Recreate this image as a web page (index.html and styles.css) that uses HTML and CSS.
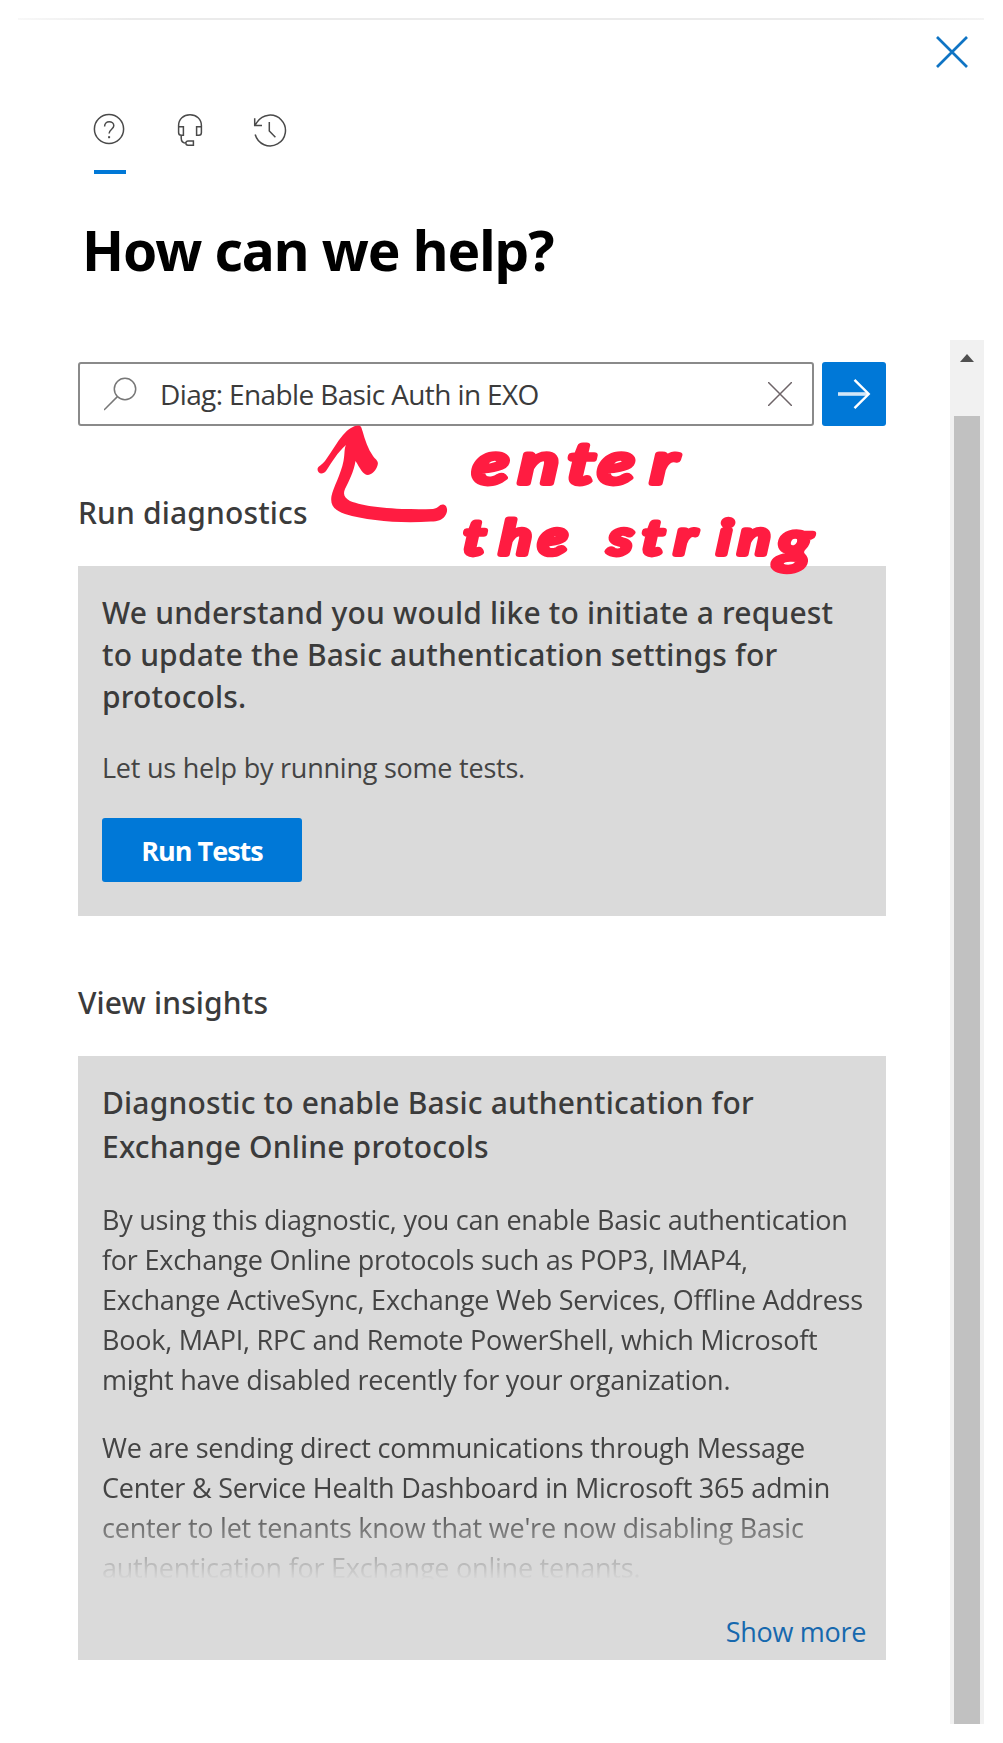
FILE: index.html
```
<!DOCTYPE html>
<html lang="en">
<head>
<meta charset="utf-8">
<title>How can we help?</title>
<link rel="stylesheet" href="styles.css">
</head>
<body>
<div class="panel">
  <header class="panel-header">
    <button class="icon-button close" aria-label="Close">
      <svg width="32" height="32" viewBox="0 0 32 32"><path d="M1 1L31 31M31 1L1 31"/></svg>
    </button>
    <nav class="tabs">
      <a class="tab tab-active" aria-label="Help">
        <svg width="32" height="32" viewBox="0 0 32 32"><circle cx="15" cy="15" r="14.6"/><path d="M10.6 12.4C10.6 9.4 12.6 7.8 15.2 7.8S19.8 9.5 19.8 11.8C19.8 15.2 15.1 15.5 15.1 19.6"/><path class="dot" d="M14.1 22.2h2v2h-2z"/></svg>
      </a>
      <a class="tab" aria-label="Support">
        <svg width="32" height="32" viewBox="0 0 32 32"><path d="M4.6 12.5V11.5C4.6 5 9.5.8 16 .8S27.4 5 27.4 11.5V18.5C27.4 20.5 26.4 21.3 25 21.3H22.6V12.7H27.4M4.6 12.5V18.5C4.6 20.5 5.6 21.3 7.2 21.3H9.4V12.7H4.6M7.2 21.3V24C7.2 27.8 9 29.2 12.4 29.2M14 26.9H19.4V31.2H14A2.15 2.15 0 0 1 14 26.9Z"/></svg>
      </a>
      <a class="tab" aria-label="History">
        <svg width="34" height="33" viewBox="0 0 34 33"><path d="M1.2 20.5A15.4 15.4 0 1 0 3.1 8.2L.8 11.5M.7 4.2V11.500H8M15.3 8V17L21.4 23.2"/></svg>
      </a>
    </nav>
    <h1 class="title">How can we help?</h1>
  </header>

  <div class="scroll-area">
    <main class="content">
      <div class="search">
        <div class="search-box">
          <svg class="search-icon" width="34" height="34" viewBox="0 0 34 34"><circle cx="21" cy="12" r="10.7"/><path d="M13.4 19.6L0 33"/></svg>
          <span class="query">Diag: Enable Basic Auth in EXO</span>
          <svg class="clear-icon" width="24" height="24" viewBox="0 0 24 24"><path d="M0 0L24 24M24 0L0 24"/></svg>
        </div>
        <button class="go" aria-label="Search">
          <svg width="34" height="32" viewBox="0 0 34 32"><path class="shaft" d="M1 16H31"/><path d="M17.5 1.8L31.7 16L17.5 30.2"/></svg>
        </button>
      </div>

      <h2 class="section-title">Run diagnostics</h2>
      <section class="card">
        <h3 class="card-title">We understand you would like to initiate a request<br>to update the Basic authentication settings for<br>protocols.</h3>
        <p class="text">Let us help by running some tests.</p>
        <button class="primary">Run Tests</button>
      </section>

      <h2 class="section-title">View insights</h2>
      <section class="card card-insight">
        <h3 class="card-title">Diagnostic to enable Basic authentication for<br>Exchange Online protocols</h3>
        <div class="excerpt">
          <p class="text">By using this diagnostic, you can enable Basic authentication<br>for Exchange Online protocols such as POP3, IMAP4,<br>Exchange ActiveSync, Exchange Web Services, Offline Address<br>Book, MAPI, RPC and Remote PowerShell, which Microsoft<br>might have disabled recently for your organization.</p>
          <p class="text">We are sending direct communications through Message<br>Center &amp; Service Health Dashboard in Microsoft 365 admin<br>center to let tenants know that we're now disabling Basic<br>authentication for Exchange online tenants.</p>
        </div>
        <a class="show-more">Show more</a>
      </section>
    </main>
    <div class="scrollbar">
      <svg class="scroll-up" width="14" height="8" viewBox="0 0 14 8"><path d="M7 0L14 8H0Z"/></svg>
      <div class="thumb"></div>
    </div>
  </div>
</div>

<!-- Ink annotation pointing at the search box -->
<svg class="ink" width="560" height="180" viewBox="300 415 560 180">
  <path class="arrow" d="M317.5 469C318 466 322 465 325 461C332 451 337 442 343 435C348 429 353 426 358 425.5C361.5 425.5 361.5 428 362.5 431C365 440 368 449 373 456C376 460 379 461 377.5 465.5C376 470 373 474 368 475C363 475 360 468 355.5 461C354 471 349 481 345 489C342.5 495 345 498 350 501C365 507 395 510 433 509C439 508 439 504 443.5 504.5C448 506 448 512 445 516C442 520 438 521.5 431 521.5C400 523.5 368 521 345 514C334 510 330 505 331.5 496C333 488 341 474 343.5 461C345 453 344 449 346 445C337 453 332 462 326 471C323.5 474.5 317.5 474.5 317.5 469Z"/>
  <text class="word" transform="translate(472 483) skewX(-4) scale(1.32 1)" font-size="56" x="0 35 72 95 135">enter</text>
  <text class="word" transform="translate(463 554) skewX(-4) scale(1.25 1)" font-size="47" x="0 29 60">the</text>
  <text class="word" transform="translate(608 554) skewX(-4) scale(1.25 1)" font-size="47" x="0 27 53 87 104">strin<tspan x="135" dy="7" font-size="56">g</tspan></text>
</svg>
</body>
</html>
```
FILE: styles.css
```
* { box-sizing: border-box; }

body {
  margin: 0;
  background: #fff;
  color: #3b3b3b;
  font-family: "Open Sans", "Noto Sans", sans-serif;
}

h1, h2, h3, p { margin: 0; }
button { border: 0; padding: 0; font: inherit; }
svg { display: block; fill: none; }

.panel {
  width: 966px;
  margin: 18px 0 0 18px;
}

.panel-header {
  height: 322px;
  display: flex;
  flex-direction: column;
  border-top: 2px solid;
  border-image: linear-gradient(90deg, #f8f8f8, #ebebeb 12%, #ebebeb 88%, #f4f4f4) 1;
}

.close {
  align-self: flex-end;
  margin: 16px 16px 0 0;
  background: none;
}
.close svg { stroke: #0f74c4; stroke-width: 2.7; }

.tabs {
  display: flex;
  gap: 48px;
  margin: 46px 0 0 76px;
}
.tab {
  height: 60px;
  stroke: #4a4a4a;
  stroke-width: 1.5;
}
.tab-active { border-bottom: 4px solid #0078d7; }
.tab svg { overflow: visible; }
.tab .dot { fill: #4a4a4a; stroke: none; }

.title {
  margin: 46px 0 0 64px;
  font: 700 55px/60px "Noto Sans", sans-serif;
  letter-spacing: -1.05px;
  color: #000;
}

.scroll-area {
  height: 1384px;
  display: flex;
  justify-content: space-between;
}

.content {
  width: 808px;
  margin-left: 60px;
  padding-top: 22px;
}

.search {
  display: flex;
  gap: 8px;
  height: 64px;
}
.search-box {
  flex: 1;
  display: flex;
  align-items: center;
  border: 2px solid #8a8a8a;
  border-radius: 3px;
  padding: 0 20px 0 24px;
}
.search-icon { stroke: #777; stroke-width: 1.5; }
.query {
  flex: 1;
  margin-left: 22px;
  font-size: 28px;
  line-height: 40px;
  letter-spacing: -0.62px;
}
.clear-icon { stroke: #6e6468; stroke-width: 1.5; }
.go {
  width: 64px;
  display: grid;
  place-items: center;
  border-radius: 3px;
  background: #0078d7;
}
.go svg { stroke: #fff; stroke-width: 2.4; }
.go .shaft { stroke: #d3e7f8; stroke-width: 3.6; }

.section-title {
  margin: 67px 0 33px;
  font: 500 30px/40px "Noto Sans", sans-serif;
  letter-spacing: 0.15px;
}

.card {
  background: #dadada;
  padding: 26px 24px 34px;
}
.card-title {
  font: 500 30px/42px "Noto Sans", sans-serif;
  letter-spacing: 0.17px;
  white-space: nowrap;
}
.text {
  margin-top: 30px;
  font-size: 27px;
  line-height: 40px;
  letter-spacing: -0.23px;
  white-space: nowrap;
  color: #444;
}
.primary {
  display: block;
  width: 200px;
  height: 64px;
  margin-top: 30px;
  border-radius: 3px;
  background: #0078d7;
  color: #fff;
  font-size: 27px;
  font-weight: 700;
  letter-spacing: -1px;
}

.card-insight {
  height: 604px;
  display: flex;
  flex-direction: column;
  padding: 25px 20px 8px 24px;
}
.card-insight .card-title { line-height: 44px; }
.excerpt {
  flex: none;
  height: 411px;
  overflow: hidden;
  -webkit-mask-image: linear-gradient(#000 335px, transparent);
  mask-image: linear-gradient(#000 335px, transparent);
}
.excerpt .text { margin-top: 31px; }
.excerpt .text + .text { margin-top: 28px; }
.show-more {
  align-self: flex-end;
  margin-top: 32px;
  font-size: 27px;
  line-height: 40px;
  letter-spacing: -0.3px;
  color: #1668ae;
}

.scrollbar {
  width: 34px;
  display: flex;
  flex-direction: column;
  align-items: center;
  background: #f1f1f1;
}
.scroll-up { margin: 14px 0 54px; fill: #505050; }
.thumb {
  flex: 1;
  width: 26px;
  background: #c1c1c1;
}

.ink {
  position: absolute;
  left: 300px;
  top: 415px;
}
.arrow { fill: #ff1c41; }
.word {
  font-family: "Lato", sans-serif;
  font-style: italic;
  font-weight: 400;
  fill: #ff1c41;
  stroke: #ff1c41;
  stroke-width: 6px;
  stroke-linejoin: round;
}
```
